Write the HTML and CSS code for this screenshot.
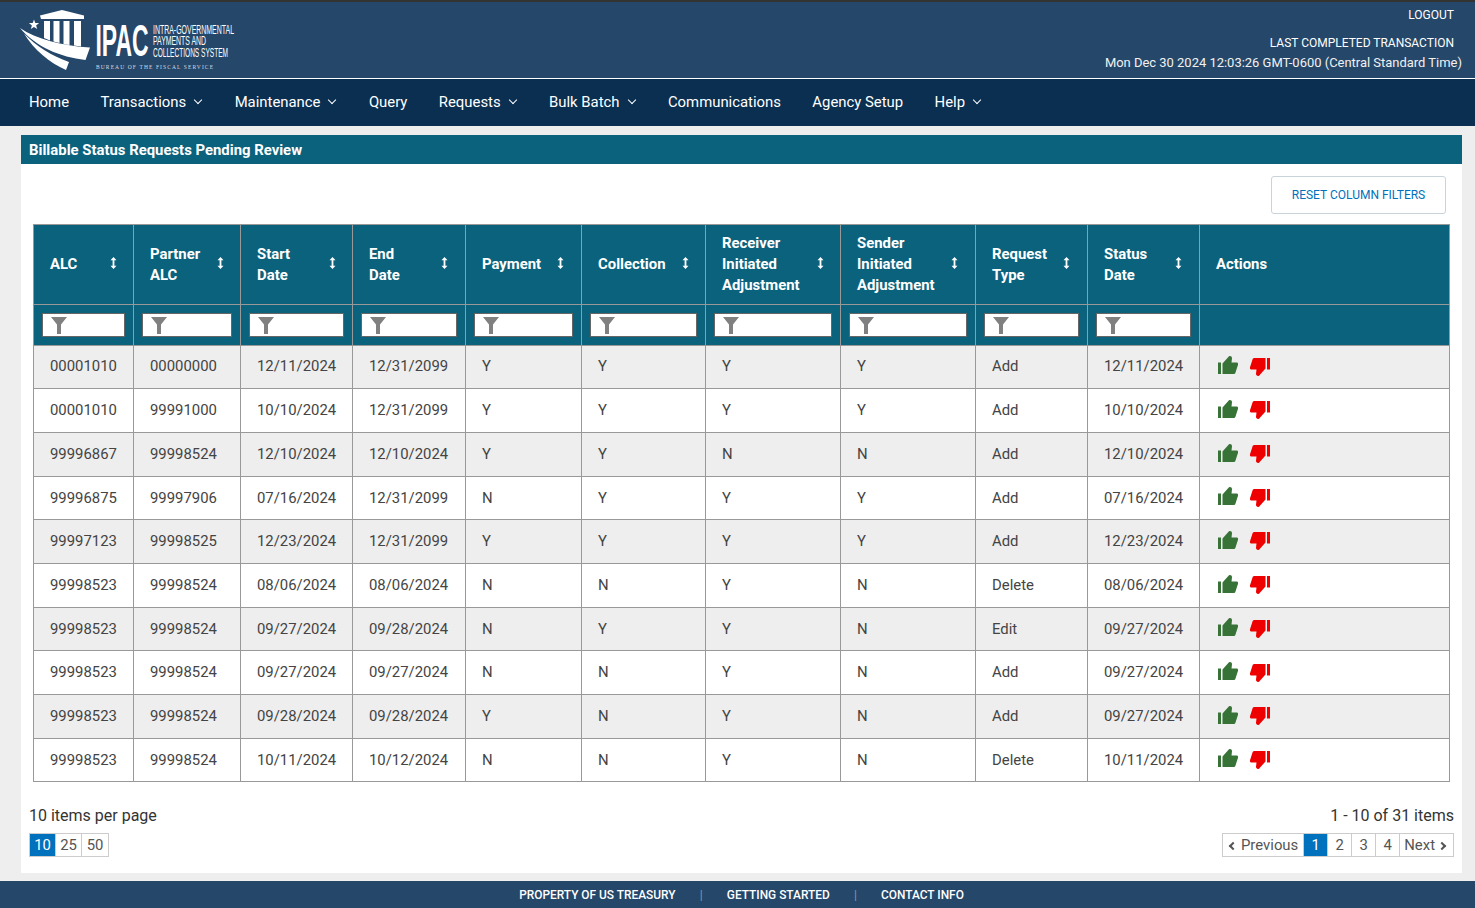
FILE: index.html
```html
<!DOCTYPE html>
<html lang="en">
<head>
<meta charset="utf-8">
<title>IPAC</title>
<link rel="stylesheet" href="styles.css">
</head>
<body>
<svg class="defs" width="0" height="0" aria-hidden="true">
  <defs>
    <symbol id="up" viewBox="0 0 20 18">
      <path d="M0 6.500h3V18H0z"/>
      <path d="M4.500 7.500 11 .3c1.500-.6 3 .3 3 2L13.500 6.500h5c1.200 0 1.800 1 1.500 2.200L17.500 16.500c-.3 1-1 1.500-2 1.500H4.500z"/>
    </symbol>
    <symbol id="down" viewBox="0 0 20 18">
      <g transform="rotate(180 10 9)">
        <path d="M0 6.500h3V18H0z"/>
        <path d="M4.500 7.500 11 .3c1.500-.6 3 .3 3 2L13.500 6.500h5c1.200 0 1.800 1 1.500 2.200L17.500 16.500c-.3 1-1 1.500-2 1.500H4.500z"/>
      </g>
    </symbol>
    <symbol id="funnel" viewBox="0 0 16 17">
      <path d="M0 0h16L10 7.500V17H6V7.500z"/>
    </symbol>
    <symbol id="sort" viewBox="0 0 7 12">
      <path d="M3.500 0 6.500 3.200H4.400v5.600h2.100L3.500 12 .5 8.800h2.100V3.200H.5z"/>
    </symbol>
  </defs>
</svg>

<header class="masthead">
  <svg class="logo" viewBox="20 10 216 62" width="216" height="62" role="img" aria-label="IPAC">
    <g fill="#fff">
      <path d="M40 15.500 62 10 84 15.500V19H41z"/>
      <path d="M44 21h6v19.500l-6-2.500zM53.500 21h6v22l-6-1.500zM63.500 21h6v24l-6-.8zM74 21h7v25.500l-7-1z"/>
      <path d="m34 19.500 1.300 3.600h3.800l-3 2.300 1.100 3.700-3.200-2.200-3.200 2.200 1.100-3.700-3-2.300h3.800z"/>
      <path d="M20 28C36 39 62 46 90 47.500L85.500 60C60 57 36 47 20 28z"/>
      <path d="M24 33.500C36 46 52 56 69 62L66 70C50 63 34 50 24 33.500z"/>
      <text class="logo-ipac" x="95.500" y="56" textLength="53" lengthAdjust="spacingAndGlyphs">IPAC</text>
      <text class="logo-small" x="153" y="33.500" textLength="81" lengthAdjust="spacingAndGlyphs">INTRA-GOVERNMENTAL</text>
      <text class="logo-small" x="153" y="45" textLength="53" lengthAdjust="spacingAndGlyphs">PAYMENTS AND</text>
      <text class="logo-small" x="153" y="56.500" textLength="75" lengthAdjust="spacingAndGlyphs">COLLECTIONS SYSTEM</text>
      <text class="logo-bureau" x="96" y="69" textLength="117" lengthAdjust="spacing">BUREAU OF THE FISCAL SERVICE</text>
    </g>
  </svg>
  <div class="session">
    <a class="logout">LOGOUT</a>
    <div class="last">LAST COMPLETED TRANSACTION</div>
    <div class="stamp">Mon Dec 30 2024 12:03:26 GMT-0600 (Central Standard Time)</div>
  </div>
</header>

<nav class="nav">
  <a>Home</a>
  <a class="has-menu">Transactions</a>
  <a class="has-menu">Maintenance</a>
  <a>Query</a>
  <a class="has-menu">Requests</a>
  <a class="has-menu">Bulk Batch</a>
  <a>Communications</a>
  <a>Agency Setup</a>
  <a class="has-menu">Help</a>
</nav>

<main class="main">
  <section class="panel">
    <h1 class="panel-title">Billable Status Requests Pending Review</h1>
    <div class="panel-body">
      <div class="toolbar"><button class="reset">RESET COLUMN FILTERS</button></div>
      <table class="grid" id="grid">
        <colgroup>
          <col class="c1"><col class="c2"><col class="c3"><col class="c4"><col class="c5"><col class="c6"><col class="c7"><col class="c8"><col class="c9"><col class="c10"><col class="c11">
        </colgroup>
        <thead>
          <tr class="head">
            <th><div class="th"><span>ALC</span><svg class="sort"><use href="#sort"/></svg></div></th>
            <th><div class="th"><span>Partner<br>ALC</span><svg class="sort"><use href="#sort"/></svg></div></th>
            <th><div class="th"><span>Start<br>Date</span><svg class="sort"><use href="#sort"/></svg></div></th>
            <th><div class="th"><span>End<br>Date</span><svg class="sort"><use href="#sort"/></svg></div></th>
            <th><div class="th"><span>Payment</span><svg class="sort"><use href="#sort"/></svg></div></th>
            <th><div class="th"><span>Collection</span><svg class="sort"><use href="#sort"/></svg></div></th>
            <th><div class="th"><span>Receiver<br>Initiated<br>Adjustment</span><svg class="sort"><use href="#sort"/></svg></div></th>
            <th><div class="th"><span>Sender<br>Initiated<br>Adjustment</span><svg class="sort"><use href="#sort"/></svg></div></th>
            <th><div class="th"><span>Request<br>Type</span><svg class="sort"><use href="#sort"/></svg></div></th>
            <th><div class="th"><span>Status<br>Date</span><svg class="sort"><use href="#sort"/></svg></div></th>
            <th><div class="th"><span>Actions</span></div></th>
          </tr>
          <tr class="filters">
            <th><div class="filter"><svg class="funnel"><use href="#funnel"/></svg></div></th>
            <th><div class="filter"><svg class="funnel"><use href="#funnel"/></svg></div></th>
            <th><div class="filter"><svg class="funnel"><use href="#funnel"/></svg></div></th>
            <th><div class="filter"><svg class="funnel"><use href="#funnel"/></svg></div></th>
            <th><div class="filter"><svg class="funnel"><use href="#funnel"/></svg></div></th>
            <th><div class="filter"><svg class="funnel"><use href="#funnel"/></svg></div></th>
            <th><div class="filter"><svg class="funnel"><use href="#funnel"/></svg></div></th>
            <th><div class="filter"><svg class="funnel"><use href="#funnel"/></svg></div></th>
            <th><div class="filter"><svg class="funnel"><use href="#funnel"/></svg></div></th>
            <th><div class="filter"><svg class="funnel"><use href="#funnel"/></svg></div></th>
            <th></th>
          </tr>
        </thead>
        <tbody>
          <tr><td>00001010</td><td>00000000</td><td>12/11/2024</td><td>12/31/2099</td><td>Y</td><td>Y</td><td>Y</td><td>Y</td><td>Add</td><td>12/11/2024</td><td class="acts"><svg class="up"><use href="#up"/></svg><svg class="down"><use href="#down"/></svg></td></tr>
          <tr><td>00001010</td><td>99991000</td><td>10/10/2024</td><td>12/31/2099</td><td>Y</td><td>Y</td><td>Y</td><td>Y</td><td>Add</td><td>10/10/2024</td><td class="acts"><svg class="up"><use href="#up"/></svg><svg class="down"><use href="#down"/></svg></td></tr>
          <tr><td>99996867</td><td>99998524</td><td>12/10/2024</td><td>12/10/2024</td><td>Y</td><td>Y</td><td>N</td><td>N</td><td>Add</td><td>12/10/2024</td><td class="acts"><svg class="up"><use href="#up"/></svg><svg class="down"><use href="#down"/></svg></td></tr>
          <tr><td>99996875</td><td>99997906</td><td>07/16/2024</td><td>12/31/2099</td><td>N</td><td>Y</td><td>Y</td><td>Y</td><td>Add</td><td>07/16/2024</td><td class="acts"><svg class="up"><use href="#up"/></svg><svg class="down"><use href="#down"/></svg></td></tr>
          <tr><td>99997123</td><td>99998525</td><td>12/23/2024</td><td>12/31/2099</td><td>Y</td><td>Y</td><td>Y</td><td>Y</td><td>Add</td><td>12/23/2024</td><td class="acts"><svg class="up"><use href="#up"/></svg><svg class="down"><use href="#down"/></svg></td></tr>
          <tr><td>99998523</td><td>99998524</td><td>08/06/2024</td><td>08/06/2024</td><td>N</td><td>N</td><td>Y</td><td>N</td><td>Delete</td><td>08/06/2024</td><td class="acts"><svg class="up"><use href="#up"/></svg><svg class="down"><use href="#down"/></svg></td></tr>
          <tr><td>99998523</td><td>99998524</td><td>09/27/2024</td><td>09/28/2024</td><td>N</td><td>Y</td><td>Y</td><td>N</td><td>Edit</td><td>09/27/2024</td><td class="acts"><svg class="up"><use href="#up"/></svg><svg class="down"><use href="#down"/></svg></td></tr>
          <tr><td>99998523</td><td>99998524</td><td>09/27/2024</td><td>09/27/2024</td><td>N</td><td>N</td><td>Y</td><td>N</td><td>Add</td><td>09/27/2024</td><td class="acts"><svg class="up"><use href="#up"/></svg><svg class="down"><use href="#down"/></svg></td></tr>
          <tr><td>99998523</td><td>99998524</td><td>09/28/2024</td><td>09/28/2024</td><td>Y</td><td>N</td><td>Y</td><td>N</td><td>Add</td><td>09/27/2024</td><td class="acts"><svg class="up"><use href="#up"/></svg><svg class="down"><use href="#down"/></svg></td></tr>
          <tr><td>99998523</td><td>99998524</td><td>10/11/2024</td><td>10/12/2024</td><td>N</td><td>N</td><td>Y</td><td>N</td><td>Delete</td><td>10/11/2024</td><td class="acts"><svg class="up"><use href="#up"/></svg><svg class="down"><use href="#down"/></svg></td></tr>
        </tbody>
      </table>
      <div class="pager-row">
        <div class="pager-col">
          <div class="count">10 items per page</div>
          <div class="pages"><span class="pg on">10</span><span class="pg">25</span><span class="pg">50</span></div>
        </div>
        <div class="pager-col right">
          <div class="count">1 - 10 of 31 items</div>
          <div class="pages nums"><span class="pg prev"><i class="chev left"></i>Previous</span><span class="pg on">1</span><span class="pg">2</span><span class="pg">3</span><span class="pg">4</span><span class="pg next">Next<i class="chev"></i></span></div>
        </div>
      </div>
    </div>
  </section>
</main>

<footer class="footer">
  <a>PROPERTY OF US TREASURY</a><span class="sep">|</span><a>GETTING STARTED</a><span class="sep">|</span><a>CONTACT INFO</a>
</footer>
</body>
</html>
```
FILE: styles.css
```css
* { box-sizing: border-box; }
html, body { margin: 0; padding: 0; }
body { height: 908px; background: #eee; font-family: Roboto, "Liberation Sans", sans-serif; color: #333; overflow: hidden; }
.defs { position: absolute; }

.masthead { height: 79px; background: #25476a; border-top: 2px solid #333; border-bottom: 1px solid #fff; display: flex; justify-content: space-between; padding-left: 20px; }
.logo { margin-top: 8px; overflow: visible; display: block; }
.logo-ipac { font: 700 45px "Liberation Sans", sans-serif; }
.logo-small { font: 400 12.500px "Liberation Sans", sans-serif; }
.logo-bureau { font: 400 5.500px "Liberation Serif", serif; fill: #d5dce3; }
.session { color: #fff; font-size: 12px; line-height: 14px; text-align: right; padding-right: 21px; }
.logout { display: block; margin-top: 6px; }
.last { margin-top: 14px; }
.stamp { margin-top: 6px; font-size: 12.960px; margin-right: -8px; color: #f1f1f1; }

.nav { height: 47px; padding-bottom: 2px; background: #0a2f51; display: flex; align-items: center; padding-left: 29px; gap: 31.400px; color: #fff; font-size: 14.880px; font-weight: 400; }
.has-menu { display: inline-flex; align-items: center; }
.has-menu::after { content: ""; width: 5px; height: 5px; border-right: 1.500px solid #fff; border-bottom: 1.500px solid #fff; transform: rotate(45deg); margin: -3px 2px 0 9px; }

.main { padding: 9px 13px 8px 21px; }
.panel { background: #fff; height: 738px; }
.panel-title { margin: 0; height: 29px; background: #0b627d; color: #fff; font-size: 14.880px; font-weight: 700; line-height: 30px; padding-left: 8px; }
.panel-body { padding: 12px 12px 0; }
.toolbar { display: flex; justify-content: flex-end; height: 48px; padding-right: 4px; }
.reset { width: 175px; height: 38px; background: #fff; border: 1px solid #c9d3da; border-radius: 3px; color: #0071bc; font: 400 12px Roboto, sans-serif; }

.grid { width: 1416px; border-collapse: collapse; table-layout: fixed; font-size: 14.880px; }
.c1 { width: 100px; } .c2 { width: 107px; } .c3 { width: 112px; } .c4 { width: 113px; } .c5 { width: 116px; }
.c6 { width: 124px; } .c7 { width: 135px; } .c8 { width: 135px; } .c9 { width: 112px; } .c10 { width: 112px; } .c11 { width: 250px; }
.grid th, .grid td { border: 1px solid #999; padding: 0 16px; text-align: left; }
.grid thead th { background: #0b627d; color: #fff; font-size: 14.880px; font-weight: 700; line-height: 20.700px; }
.head { height: 80px; }
.filters { height: 40.600px; }
.grid .filters th { padding: 0 8px; }
.th { display: flex; align-items: center; justify-content: space-between; }
.sort { width: 7px; height: 12px; fill: #fff; flex: none; margin: -3px .5px 0 0; }
.head th:nth-child(4) .sort, .head th:nth-child(5) .sort, .head th:nth-child(8) .sort, .head th:nth-child(9) .sort, .head th:nth-child(10) .sort { margin-right: 1.500px; }
.filter { height: 24px; background: #fff; border: 1px solid #666; padding-left: 8px; }
.funnel { width: 16px; height: 17px; fill: #808080; display: block; margin-top: 3px; }
.grid td { height: 43.700px; color: #444; padding-bottom: 1px; }
tbody tr:nth-child(odd) td { background: #eee; }
.acts svg { width: 20px; height: 18px; vertical-align: middle; }
.up { fill: #377237; margin: -4px 12px 0 2px; }
.down { fill: #ee0000; margin-top: -1px; }

.pager-row { display: flex; justify-content: space-between; padding: 23.500px 0 0; margin-left: -4px; margin-right: -4px; }
.count { font-size: 16px; line-height: 20px; color: #333; }
.right { text-align: right; }
.pages { display: flex; margin-top: 7px; border: 1px solid #ccc; width: max-content; height: 24px; font-size: 14.880px; line-height: 22px; color: #555; }
.nums { margin-left: auto; }
.pg { padding: 0 4px; border-left: 1px solid #ccc; min-width: 24px; text-align: center; }
.pages:not(.nums) .pg { min-width: 26px; }
.pages:not(.nums) .pg:first-child { min-width: 25px; }
.pages:not(.nums) .pg:last-child { min-width: 27px; }
.pg:first-child { border-left: 0; }
.pg.on { background: #0071bc; color: #fff; }
.prev { padding: 0 5px 0 4px; }
.next { padding: 0 6px 0 4px; }
.chev { display: inline-block; width: 6px; height: 6px; border-top: 2px solid #555; border-right: 2px solid #555; transform: rotate(45deg); margin: 0 2px 1px 4px; }
.chev.left { transform: rotate(-135deg); margin: 0 5px 1px 3px; }

.footer { height: 27px; background: #25476a; color: #fff; font-size: 11.900px; font-weight: 500; line-height: 28px; display: flex; justify-content: center; padding-left: 8px; }
.sep { margin: 0 24.200px; color: #8496a8; font-weight: 400; }
```
